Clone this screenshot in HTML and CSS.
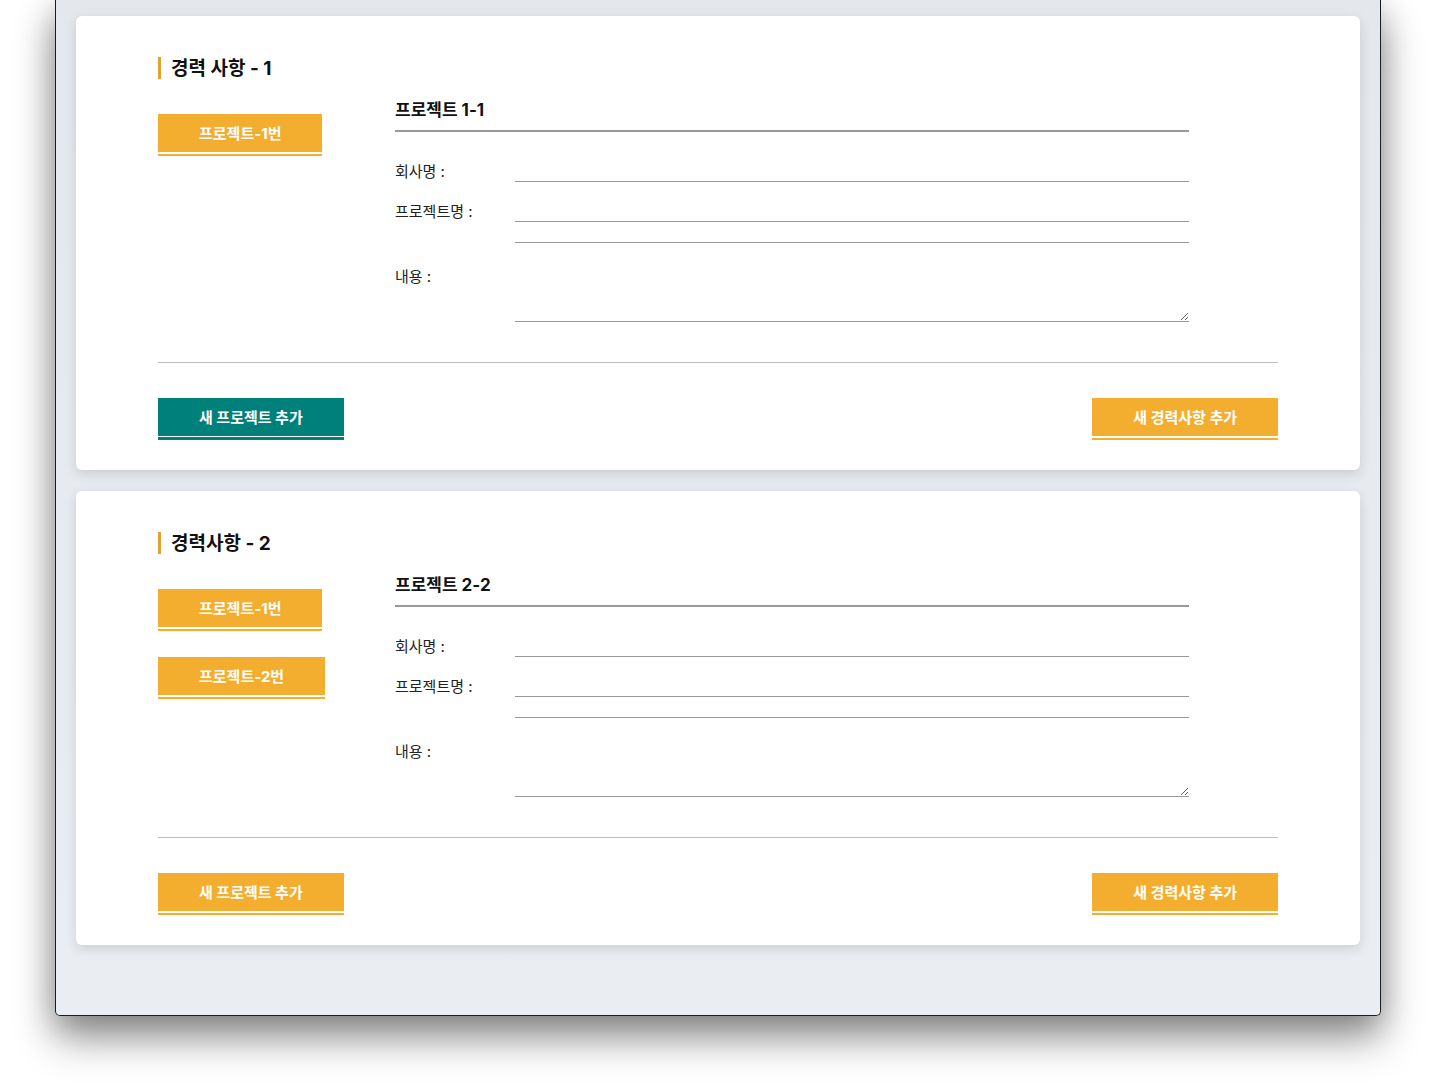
FILE: index.html
```html
<!DOCTYPE html>
<html lang="ko">
<head>
<meta charset="utf-8">
<title>경력 사항</title>
<link rel="stylesheet" href="styles.css">
</head>
<body>
<div class="window">
  <div class="cards">
    <section class="card">
      <h2 class="card-title">경력 사항 - 1</h2>
      <div class="card-body">
        <div class="proj-list">
          <button class="btn btn-orange">프로젝트-1번</button>
        </div>
        <div class="proj-form">
          <h3 class="proj-title">프로젝트 1-1</h3>
          <div class="field first">
            <label class="label">회사명 :</label>
            <input class="input" type="text">
          </div>
          <div class="field">
            <label class="label">프로젝트명 :</label>
            <input class="input" type="text">
          </div>
          <div class="field tight">
            <span class="label"></span>
            <input class="input" type="text">
          </div>
          <div class="field area">
            <label class="label">내용 :</label>
            <textarea class="textarea"></textarea>
          </div>
        </div>
      </div>
      <hr class="divider">
      <div class="card-actions">
        <button class="btn btn-teal">새 프로젝트 추가</button>
        <button class="btn btn-orange">새 경력사항 추가</button>
      </div>
    </section>

    <section class="card">
      <h2 class="card-title">경력사항 - 2</h2>
      <div class="card-body">
        <div class="proj-list">
          <button class="btn btn-orange">프로젝트-1번</button>
          <button class="btn btn-orange">프로젝트-2번</button>
        </div>
        <div class="proj-form">
          <h3 class="proj-title">프로젝트 2-2</h3>
          <div class="field first">
            <label class="label">회사명 :</label>
            <input class="input" type="text">
          </div>
          <div class="field">
            <label class="label">프로젝트명 :</label>
            <input class="input" type="text">
          </div>
          <div class="field tight">
            <span class="label"></span>
            <input class="input" type="text">
          </div>
          <div class="field area">
            <label class="label">내용 :</label>
            <textarea class="textarea"></textarea>
          </div>
        </div>
      </div>
      <hr class="divider">
      <div class="card-actions">
        <button class="btn btn-orange">새 프로젝트 추가</button>
        <button class="btn btn-orange">새 경력사항 추가</button>
      </div>
    </section>
  </div>
</div>
</body>
</html>
```

FILE: styles.css
```css
* { box-sizing: border-box; }

html, body {
  margin: 0;
  padding: 0;
  background: #ffffff;
  font-family: Inter, "Noto Sans CJK KR", sans-serif;
  color: #111;
}

body {
  height: 1089px;
  overflow: hidden;
}

.window {
  margin-left: 55px;
  width: 1326px;
  height: 1016px;
  background: linear-gradient(#e4e8ec, #eaeef2);
  border: 1px solid #1c1c1c;
  border-top: none;
  border-radius: 0 0 5px 5px;
  box-shadow: 0 22px 40px rgba(0, 0, 0, 0.42), 0 6px 30px rgba(0, 0, 0, 0.18);
  padding: 16px 20px 0;
}

.cards {
  display: flex;
  flex-direction: column;
  gap: 21px;
}

.card {
  background: #fff;
  border-radius: 6px;
  box-shadow: 0 4px 12px rgba(0, 0, 0, 0.13);
  padding: 41px 82px 30px;
}

.card-title {
  margin: 0;
  font-size: 19px;
  font-weight: 700;
  line-height: 21px;
  padding-top: 1px;
  height: 22px;
  border-left: 3px solid #e3a130;
  padding-left: 10px;
  color: #111;
}

.card-body {
  display: flex;
  margin-top: 17px;
}

.proj-list {
  width: 237px;
  flex: none;
  padding-top: 18px;
  display: flex;
  flex-direction: column;
  align-items: flex-start;
  gap: 30px;
}

.btn {
  display: block;
  height: 38px;
  padding: 1px 41px 0;
  border: none;
  font-family: Inter, "Noto Sans CJK KR", sans-serif;
  font-size: 15px;
  font-weight: 700;
  line-height: 37px;
  color: #fff;
  cursor: pointer;
}

.btn-orange {
  background: #f4ae2f;
  box-shadow: 0 2px 0 #fff, 0 4px 0 #f4ae2f;
}

.btn-teal {
  background: #00807a;
  box-shadow: 0 1px 0 #fff, 0 4px 0 #00807a;
}

.proj-form {
  width: 794px;
  flex: none;
}

.proj-title {
  margin: 0;
  font-size: 17px;
  font-weight: 700;
  line-height: 24px;
  padding-top: 2px;
  padding-bottom: 8px;
  border-bottom: 2px solid #999;
  color: #111;
}

.field {
  display: flex;
  align-items: center;
  margin-top: 20px;
}

.field.first { margin-top: 30px; }
.field.tight { margin-top: 1px; }
.field.area {
  align-items: flex-start;
  margin-top: 25px;
}

.label {
  width: 120px;
  flex: none;
  font-size: 15px;
  line-height: 18px;
  color: #222;
}

.input {
  flex: 1;
  height: 20px;
  border: none;
  border-bottom: 1px solid #9a9a9a;
  outline: none;
  padding: 0;
  background: transparent;
  font-size: 14px;
}

.textarea {
  flex: 1;
  height: 54px;
  border: none;
  border-bottom: 1px solid #9a9a9a;
  outline: none;
  padding: 0;
  background: transparent;
  resize: vertical;
  font-size: 14px;
}

.divider {
  margin: 40px 0 0;
  border: none;
  border-top: 1px solid #bdbdbd;
  height: 0;
}

.card-actions {
  display: flex;
  justify-content: space-between;
  margin-top: 35px;
  padding-bottom: 4px;
}
```
